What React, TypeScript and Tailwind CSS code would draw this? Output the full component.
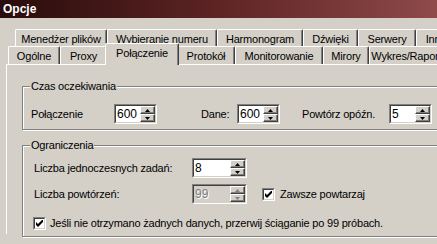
import React from 'react';

const font = "font-['Liberation_Sans',Arial,sans-serif]";

const Arrow = ({ up, disabled }: { up?: boolean; disabled?: boolean }) => (
  <svg width="5" height="3" viewBox="0 0 5 3" className="block">
    <path d={up ? 'M2.5 0 L5 3 L0 3 Z' : 'M0 0 L5 0 L2.5 3 Z'} fill={disabled ? '#808080' : '#000'} />
  </svg>
);

const Spin = ({ value, width, disabled }: { value: string; width: string; disabled?: boolean }) => (
  <div className={`${width} h-[20px] border border-t-[#808080] border-l-[#808080] border-b-white border-r-white`}>
    <div
      className={`h-full flex border border-t-[#404040] border-l-[#404040] border-b-[#d4d0c8] border-r-[#d4d0c8] ${
        disabled ? 'bg-[#d4d0c8]' : 'bg-white'
      }`}
    >
      <div
        className={`flex-1 pl-[1px] leading-[16px] text-[12px] tracking-normal ${
          disabled ? 'text-[#808080] [text-shadow:1px_1px_0_#fff]' : 'text-black'
        }`}
      >
        {value}
      </div>
      <div className="w-[15px] flex flex-col">
        {[true, false].map((up) => (
          <div
            key={String(up)}
            className="h-[8px] flex items-center justify-center bg-[#d4d0c8] border border-t-white border-l-white border-b-[#404040] border-r-[#404040] shadow-[inset_-1px_-1px_0_#808080]"
          >
            <Arrow up={up} disabled={disabled} />
          </div>
        ))}
      </div>
    </div>
  </div>
);

const Check = () => (
  <div className="w-[13px] h-[13px] shrink-0 border border-t-[#808080] border-l-[#808080] border-b-white border-r-white">
    <div className="w-full h-full bg-white border border-t-[#404040] border-l-[#404040] border-b-[#d4d0c8] border-r-[#d4d0c8] flex items-center justify-center">
      <svg width="7" height="7" viewBox="0 0 7 7" className="block">
        <path d="M0 2 L2 4 L7 -1 L7 2 L2 7 L0 5 Z" fill="#000" />
      </svg>
    </div>
  </div>
);

const Tab = ({ label, width, selected }: { label: string; width: string; selected?: boolean }) => (
  <div
    className={`${width} shrink-0 flex justify-center rounded-t-[2px] bg-[#d4d0c8] border-t border-l border-r border-t-white border-l-white border-r-[#404040] shadow-[inset_-1px_0_0_#808080] whitespace-nowrap overflow-hidden ${
      selected ? 'h-[22px] -mx-[2px] -mb-[1px] relative z-10 pt-[2px]' : 'h-[18px] pt-[2px]'
    }`}
  >
    {label}
  </div>
);

const Group = ({ title, height, children }: { title: string; height: string; children: React.ReactNode }) => (
  <div
    className={`relative ${height} w-[440px] border border-[#808080] shadow-[inset_1px_1px_0_#fff,1px_1px_0_#fff]`}
  >
    <div className="absolute -top-[8px] left-[7px] px-[1px] bg-[#d4d0c8] leading-[14px]">{title}</div>
    {children}
  </div>
);

export default function App() {
  return (
    <div className={`w-[437px] h-[244px] overflow-hidden bg-[#d4d0c8] text-black text-[11px] tracking-[-0.2px] ${font}`}>
      {/* title bar */}
      <div className="h-[18px] bg-gradient-to-r from-[#2a0c0c] via-[#5e2424] to-[#8f4a4a] text-white font-bold text-[12px] tracking-normal leading-[18px] pl-[3px]">
        Opcje
      </div>

      <div className="pl-[6px] pt-[11px]">
        {/* tabs back row */}
        <div className="flex pl-[9px] h-[17px] leading-[14px]">
          <Tab label="Menedżer plików" width="w-[92px]" />
          <Tab label="Wybieranie numeru" width="w-[110px]" />
          <Tab label="Harmonogram" width="w-[86px]" />
          <Tab label="Dźwięki" width="w-[55px]" />
          <Tab label="Serwery" width="w-[58px]" />
          <Tab label="Inne" width="w-[40px]" />
        </div>
        {/* tabs front row */}
        <div className="flex items-end pl-[2px] h-[18px] leading-[14px]">
          <Tab label="Ogólne" width="w-[52px]" />
          <Tab label="Proxy" width="w-[47px]" />
          <Tab label="Połączenie" width="w-[74px]" selected />
          <Tab label="Protokół" width="w-[58px]" />
          <Tab label="Monitorowanie" width="w-[88px]" />
          <Tab label="Mirory" width="w-[46px]" />
          <Tab label="Wykres/Raporty" width="w-[80px]" />
        </div>

        {/* panel */}
        <div className="h-[170px] border-t border-l border-white pl-[15px] pt-[21px]">
          <Group title="Czas oczekiwania" height="h-[44px]">
            <div className="flex items-center pl-[8px] pt-[17px]">
              <div className="w-[83px]">Połączenie</div>
              <Spin value="600" width="w-[43px]" />
              <div className="ml-[44px] w-[36px]">Dane:</div>
              <Spin value="600" width="w-[43px]" />
              <div className="ml-[22px] w-[87px]">Powtórz opóźn.</div>
              <Spin value="5" width="w-[43px]" />
            </div>
          </Group>

          <div className="h-[15px]" />

          <Group title="Ograniczenia" height="h-[92px]">
            <div className="pl-[11px] pt-[12px]">
              <div className="flex items-center h-[20px]">
                <div className="w-[158px]">Liczba jednoczesnych zadań:</div>
                <Spin value="8" width="w-[55px]" />
              </div>
              <div className="flex items-center h-[20px] mt-[6px]">
                <div className="w-[158px]">Liczba powtórzeń:</div>
                <Spin value="99" width="w-[55px]" disabled />
                <div className="ml-[15px]">
                  <Check />
                </div>
                <div className="ml-[5px]">Zawsze powtarzaj</div>
              </div>
              <div className="flex items-center mt-[11px]">
                <div className="-ml-[1px]">
                  <Check />
                </div>
                <div className="ml-[4px]">Jeśli nie otrzymano żadnych danych, przerwij ściąganie po 99 próbach.</div>
              </div>
            </div>
          </Group>
        </div>
      </div>
    </div>
  );
}
